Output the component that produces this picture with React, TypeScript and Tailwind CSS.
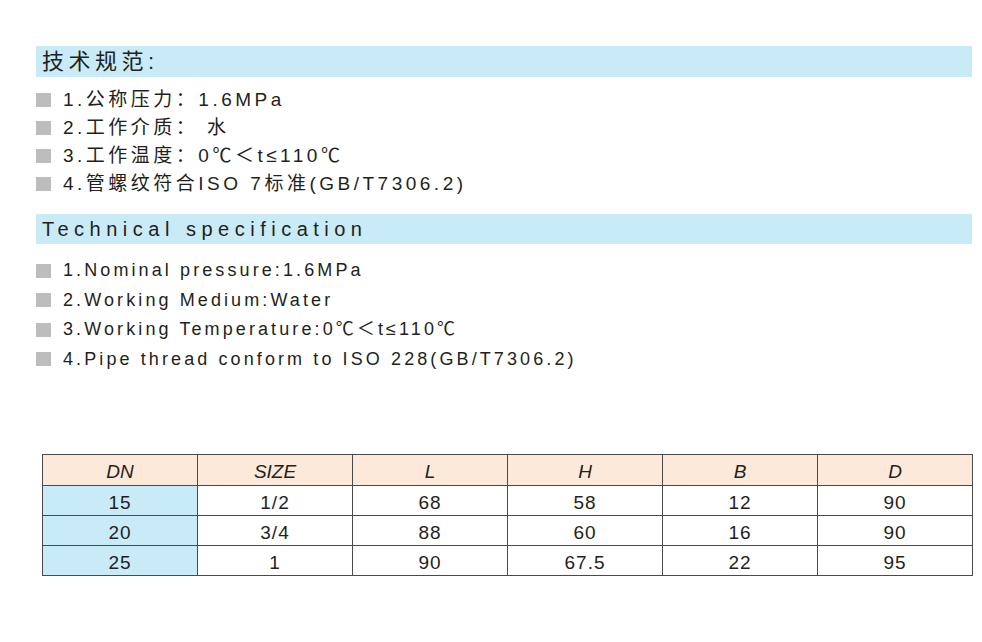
const zh = [
  "1.公称压力：1.6MPa",
  "2.工作介质： 水",
  "3.工作温度：0℃＜t≤110℃",
  "4.管螺纹符合ISO 7标准(GB/T7306.2)",
];

const en = [
  "1.Nominal pressure:1.6MPa",
  "2.Working Medium:Water",
  "3.Working Temperature:0℃＜t≤110℃",
  "4.Pipe thread conform to ISO 228(GB/T7306.2)",
];

const heads = ["DN", "SIZE", "L", "H", "B", "D"];
const rows = [
  ["15", "1/2", "68", "58", "12", "90"],
  ["20", "3/4", "88", "60", "16", "90"],
  ["25", "1", "90", "67.5", "22", "95"],
];

const narrow = {
  fontFamily: '"Liberation Sans Narrow", "Liberation Sans", "Noto Sans CJK SC", sans-serif',
};

function Bullet({ text, className }: { text: string; className: string }) {
  return (
    <div className={`flex items-center ${className}`}>
      <span className="mr-3 h-[14px] w-[15px] shrink-0 bg-[#bdbdbd]" />
      <span className="whitespace-pre">{text}</span>
    </div>
  );
}

export default function App() {
  return (
    <div className="h-[642px] w-[982px] bg-white text-[#231f20]" style={narrow}>
      <div className="pl-[36px] pr-[10px] pt-[46px]">
        <div className="flex h-[31px] items-center bg-[#c9ebf8] pl-[6px] text-[22px] tracking-[4.5px]">
          技术规范:
        </div>
        <div className="mt-[9px] flex flex-col text-[19px] tracking-[3.5px]">
          {zh.map((t) => (
            <Bullet key={t} text={t} className="h-[28px]" />
          ))}
        </div>

        <div className="mt-[16px] flex h-[30px] items-center bg-[#c9ebf8] pl-[6px] text-[20px] tracking-[5.5px]">
          Technical specification
        </div>
        <div className="mt-[12px] flex flex-col text-[18px] tracking-[3.1px]">
          {en.map((t) => (
            <Bullet key={t} text={t} className="h-[29.5px]" />
          ))}
        </div>
      </div>

      <div className="ml-[42px] mt-[80px] w-[931px]" style={{ fontFamily: '"Liberation Sans", Arial, sans-serif' }}>
        <table className="w-full table-fixed border-collapse text-[19px] leading-none text-[#231f20]">
          <thead>
            <tr className="h-[31px] bg-[#fde9da]">
              {heads.map((h) => (
                <th key={h} className="border border-[#4a4a4a] p-0 pt-[3px] text-center font-normal italic">
                  {h}
                </th>
              ))}
            </tr>
          </thead>
          <tbody>
            {rows.map((r) => (
              <tr key={r[0]} className="h-[30px]">
                {r.map((c, i) => (
                  <td
                    key={i}
                    className={`border border-[#4a4a4a] p-0 pt-[3px] text-center tracking-[1px] ${i === 0 ? "bg-[#c9ebf8]" : ""}`}
                  >
                    {c}
                  </td>
                ))}
              </tr>
            ))}
          </tbody>
        </table>
      </div>
    </div>
  );
}
